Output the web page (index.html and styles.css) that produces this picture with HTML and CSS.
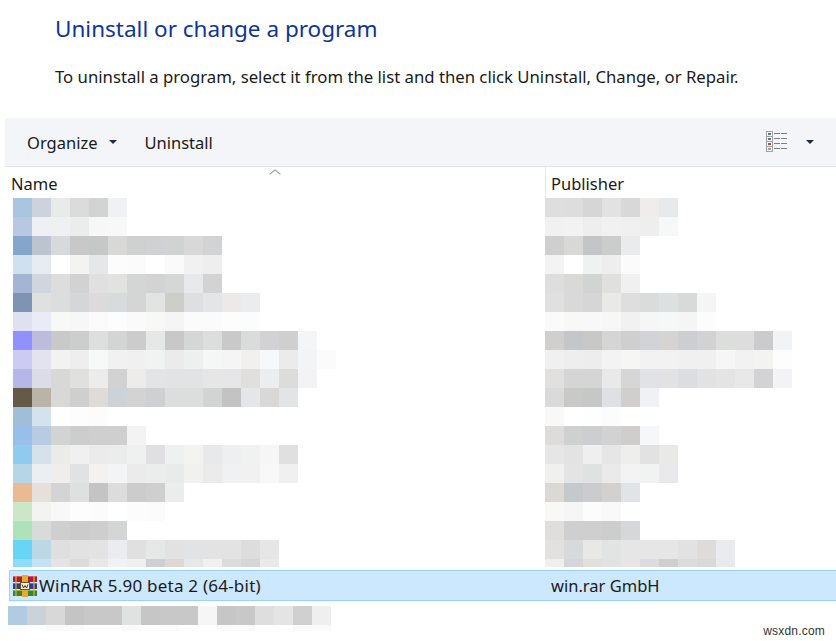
FILE: index.html
```html
<!DOCTYPE html>
<html lang="en">
<head>
    <meta charset="UTF-8">
    <title>Programs and Features</title>
    <link rel="stylesheet" href="styles.css">
</head>
<body>

<div class="page">
    <div class="intro">
        <h1>Uninstall or change a program</h1>
        <p>To uninstall a program, select it from the list and then click Uninstall, Change, or Repair.</p>
    </div>

    <div class="toolbar">
        <div class="toolbar-item organize">
            <span>Organize</span>
            <span class="caret"></span>
        </div>
        <div class="toolbar-item uninstall">Uninstall</div>
        <div class="view-menu">
            <svg class="view-icon" width="22" height="22" viewBox="0 0 22 22">
                <rect x="1.5" y="0.5" width="6" height="20" fill="#f4f5f6" stroke="#a2a2a2"/>
                <path d="M1 5.5h7M1 10.5h7M1 15.5h7" stroke="#a2a2a2"/>
                <rect x="3" y="2" width="3" height="2" fill="#5d7a80"/>
                <rect x="3" y="7" width="3" height="2" fill="#5d7a80"/>
                <rect x="3" y="12" width="3" height="2" fill="#b0502e"/>
                <rect x="3" y="17" width="3" height="2" fill="#9aa4a8"/>
                <path d="M9 2.5h6M16 2.5h6M9 7.5h6M16 7.5h6M9 12.5h6M16 12.5h6M9 17.5h6M16 17.5h6" stroke="#808080"/>
            </svg>
            <span class="caret"></span>
        </div>
    </div>

    <div class="columns">
        <div class="column-name">Name<span class="sort-arrow"></span></div>
        <div class="column-publisher">Publisher</div>
    </div>

    <div class="blur-list" id="blurList"></div>

    <div class="selected-row">
        <div class="selected-name">
            <svg class="rar-icon" width="24" height="22" viewBox="0 0 24 22">
                <rect x="0" y="1" width="24" height="6" fill="#a81f3c"/>
                <rect x="0" y="1" width="24" height="1" fill="#d8566a"/>
                <rect x="0" y="8" width="24" height="6" fill="#2e3a94"/>
                <rect x="0" y="8" width="24" height="1" fill="#6472c4"/>
                <rect x="0" y="15" width="24" height="6" fill="#3a8430"/>
                <rect x="0" y="15" width="24" height="1" fill="#80bc58"/>
                <rect x="9" y="0" width="6" height="22" fill="#eba82e"/>
                <rect x="2" y="1" width="2" height="20" fill="#eba82e" opacity="0.6"/>
                <rect x="20" y="1" width="2" height="20" fill="#eba82e" opacity="0.6"/>
                <rect x="7.5" y="7.5" width="9" height="7" fill="#f6efdc" stroke="#6e5220"/>
                <path d="M9 9.5l1.5 3.5 1.5-2.5 1.5 2.5 1.5-3.5" fill="none" stroke="#4a3410"/>
            </svg>
            <span class="selected-text">WinRAR 5.90 beta 2 (64-bit)</span>
        </div>
        <div class="selected-publisher">win.rar GmbH</div>
    </div>

    <div class="last-row" id="lastRow"></div>
    <div class="last-row-tail" id="lastTail"></div>

    <div class="watermark">wsxdn.com</div>
</div>

<script src="app.js"></script>
</body>
</html>
```

FILE: styles.css
```css
html, body {
    margin: 0;
    padding: 0;
    background-color: #ffffff;
}

body {
    font-family: "Noto Sans", Arial, sans-serif;
    color: #1a1a1a;
}

.page {
    position: relative;
    width: 836px;
    height: 641px;
    overflow: hidden;
}

.intro {
    height: 118px;
    padding-left: 55px;
    box-sizing: border-box;
}

.intro h1 {
    margin: 0;
    padding-top: 13px;
    font-size: 22.5px;
    line-height: 32px;
    font-weight: 400;
    color: #0f3694;
}

.intro p {
    margin: 0;
    padding-top: 20px;
    font-size: 16.73px;
    line-height: 24px;
}

.toolbar {
    display: flex;
    align-items: center;
    height: 49px;
    margin-left: 5px;
    box-sizing: border-box;
    background-color: #f3f5f8;
    border-bottom: 1px solid #e4e6e9;
    font-size: 16.5px;
}

.toolbar-item {
    display: flex;
    align-items: center;
}

.organize {
    margin-left: 22px;
    gap: 12px;
}

.uninstall {
    margin-left: 27px;
}

.caret {
    width: 0;
    height: 0;
    border-left: 4px solid transparent;
    border-right: 4px solid transparent;
    border-top: 4px solid #1e2d3d;
}

.view-menu {
    display: flex;
    align-items: center;
    margin-left: auto;
    margin-right: 22px;
    gap: 19px;
}

.view-icon {
    display: block;
}

.columns {
    display: flex;
    height: 31px;
    font-size: 16.5px;
}

.column-name {
    position: relative;
    width: 540px;
    padding: 5px 0 0 6px;
    box-sizing: border-box;
    margin-left: 5px;
    line-height: 24px;
}

.sort-arrow {
    position: absolute;
    left: 266px;
    top: 3px;
    width: 7px;
    height: 7px;
    border-left: 1px solid #8a8a8a;
    border-top: 1px solid #8a8a8a;
    transform: scaleY(0.8) rotate(45deg);
}

.column-publisher {
    flex: 1;
    padding: 5px 0 0 5px;
    border-left: 1px solid #e8e8e8;
    line-height: 24px;
}

.blur-list {
    height: 369px;
    overflow: hidden;
}

.blur-row {
    display: flex;
    height: 19px;
    padding-left: 13px;
}

.blur-cols {
    display: flex;
    flex-shrink: 0;
    width: 532px;
}

.cell {
    width: 19px;
    height: 19px;
    flex-shrink: 0;
}

.selected-row {
    display: flex;
    height: 31px;
    margin: 3px 0 0 9px;
    box-sizing: border-box;
    background-color: #cce8ff;
    border: 1px solid #99d1ff;
    border-right: none;
    font-size: 16.5px;
    line-height: 29px;
}

.selected-name {
    display: flex;
    align-items: center;
    width: 535px;
    padding-left: 3px;
    box-sizing: border-box;
    gap: 2px;
}

.selected-text {
    font-size: 17px;
    letter-spacing: 0.23px;
}

.rar-icon {
    display: block;
}

.selected-publisher {
    padding-left: 6px;
}

.last-row {
    display: flex;
    margin: 5px 0 0 8px;
}

.last-row-tail {
    display: flex;
    margin-left: 8px;
}

.last-row-tail .cell {
    height: 6px;
}

.watermark {
    position: absolute;
    right: 11px;
    bottom: 3px;
    font-family: "Liberation Sans", Arial, sans-serif;
    font-size: 12px;
    line-height: 14px;
    letter-spacing: 0.2px;
    color: #333333;
}
```

FILE: app.js
```js
// colours of the pixelated rows: [name column, publisher column]
const rows = [
    ['a8c6e0 ccd3dc e9eaea dbdbdb d2d4d4 f0f1f3', 'dedede dddddd d6d6d6 e2e2e2 d8d8d8 eeedeb e8e9ea'],
    ['b8c8e0 eef0f3 eff0f1 ebecec f7f7f7 f8f8f8', 'f1f1f1 f2f2f2 eeeeee f1f1f1 f0f0f0 eeeeee f6f8f7'],
    ['84a6cc bcc4d0 d8d9da c8c8c8 c6c8c8 d8d8d6 cfd1d1 d0d1d2 d1d2d2 d8d8d8 d2d3d5', 'cfcfcf d8d8d6 c4c5c6 cbcccc e9ebec'],
    ['cfe0f0 e8ecf0 ffffff f3f3f2 e6e7e8 fcfcfc fbfbfb ffffff fafafa f1f1f2 eeeeee', 'f3f3f3 ffffff f0f1f1 eeeeee fbfbfb'],
    ['a2b5d3 d0d5de dddddd d2d2d2 e0e0e0 e2e2e0 d4d5d5 d3d3d4 d5d6d6 e8e9ea d3d3d3', 'dedede d9d9d7 d2d3d3 e0e0de f0f0f0'],
    ['7f93b2 e0e0e0 dcdddd d5d6d7 dcdada d8dbdd d5d5d5 e2e3e3 cdcdca dddfe1 e4e5e7 ebeae8 ebecee', 'e0e0e0 d9d9d9 d6d6d6 e9e9e7 dedede dadbdb dde0e0 d8d9d9 f5f5f5'],
    ['dfe0f2 ebebf8 f8f8f6 f6f7f6 fbfbfb fdfdfd fafafa f8f8f7 f5f5f5 fbfbfb fbfbfb fdfdfd fbfcfc', 'fafafa f8f8f7 f8f8f8 f7f7f7 f1f1f1 f6f6f6 f6f7f7 f5f5f5 fcfcfc'],
    ['9090ff bcbcdc c9c9c9 cccdcd dedede d3d5d5 cdcccc e6e8e8 c8c8c8 d5d7d7 dcdede c9c9c9 dadcdc d2d2d4 cfcfcf f4f5f7', 'd0cfcd c5c6c9 c8c8c6 d5d5d5 cfcfcf d2d3d6 d6d4d2 cdced1 d2d2d2 dcdedc dddddd cbcbcd f2f3f5'],
    ['cbcbf4 e3e3f0 f2f2f2 eeeeee f7f8f8 f1f1f2 f0f0f0 f1f2f2 ebebec eef0f0 f5f6f6 f5f5f5 f1f0ef f7f8f9 ebebeb f3f4f5 fbfbfb', 'f0f0f0 eeeeee ededed f3f3f3 f6f6f5 f2f2f2 f2f2f2 f0f0f0 f0f0f0 f6f6f6 f2f2f2 f3f3f2 fdfdfd'],
    ['b6b6e8 dcdce8 d8d8d8 e0e0de ececec d2d2d2 eeecea e2e4e6 e2e3e4 e2e3e4 e6e6e7 e6e6e8 e0dfde ecedef dcdcda f3f3f5', 'e2e0de d5d5d5 d5d5d5 e9e9ea d6d6d6 e0e2e5 e3e2e2 dcdde0 e2e2e2 e4e4e4 e8e8e8 d3d3d6 f3f3f5'],
    ['655a45 b9b3a8 d8d8d6 cfcfd0 dfdbd8 cdd2d6 d3d3d3 cfd0d2 dcdede dcdddd d2d3d3 c3c3c3 e5e6e8 d9d8d6 e3e4e6', 'd9dad9 c9c9c8 c6c8c8 dee0e3 d0cfce f0f1f5'],
    ['a0bfd6 d3e2ed ffffff fdfdfd fcfcfc', 'f8f8f8 ffffff fefefe fcfcfc'],
    ['98bfea b8cbe2 d2d3d3 cdcdcd cfcfcf cfcfcf f3f3f3', 'dedcdb cfd0d0 cdcecf d2d2d2 cfcecc f6f7f9'],
    ['8fcbee d5e2ec ebebe9 f0f0f0 ebebec ebecec eff0f0 e0e0e2 eff0f0 f3f3f1 e8e9ea eeeff0 f0f1f1 f6f6f6 e0e0e0', 'e6e6e6 e3e3e3 efefef e6e6e6 eeeeec e2e2e2 e9e9e8'],
    ['b6d6e8 ebeff2 efeeec e0e2e4 f3f2f1 f3f4f6 ebebeb ebecec e9ebeb f1f1f0 ebebec f0f1f2 f1f1f2 f8f8f8 f0f0f0', 'f0f0ee e4e4e4 e0e1e1 eaeaea f3f3f3 f1f3f3 e9e9eb'],
    ['eabb92 e5e0da d4d4d4 dfe0e0 c4c4c4 dcdcdc cccccc cfcfcf ebeded', 'dcd8d4 c5c9cc ccccce d3d1d0 e0e4e6'],
    ['cbe6c8 f3f3f1 f8f8f8 fdfdfd fbfbfb ffffff fcfcfc fbfbfb', 'f8f8f8 f6f6f6 fcfcfc f9f9f9'],
    ['aee2b8 d8dcd8 cfcfcf cccccc cecece d4d5d5', 'dfdedd cfcfcf cfcfcf cdcdcd d6d7d9'],
    ['68d4f8 bcd8e4 dfdfdf e2e2e2 e3e3e3 ebecef e0e0e0 e6e8e8 e2e2e2 e2e3e5 e3e3e3 e3e3e3 dddddd e6e6e6', 'e2e1df d8d9db e8e8e6 e2e4e4 e6e6e6 e6e6e6 e6e6e6 e2e2e2 dedcda e9ebee'],
    ['90dcf8 c4e2f4 e4e4e4 dedcda e8e8e8 f0f1f4 efefef cfd0d5 dcd8d6 e6e7e9 f0f0f0 dcdcdc d6d6d8 eaeaea', 'efefed d6d6da e2e0de e2e2e4 e8e6e4 dcdcde cfcfcf dcdcde d9d9d9 e8eaec']
];

const lastRow = 'b0cbe2 ccd3d8 d8d8d8 c4c4c4 c8c8c8 c8c8c8 e0e2e2 c6c6c6 c8c8c8 c8c8c8 f6f6f6 c6c6c6 c8c8c8 dedede e4e4e4 d0d0d0 efefef';
const lastTail = 'ffffff ffffff fafafa fafafa ffffff ffffff fafafa ffffff fafafa ffffff ffffff fafafa fafafa ffffff ffffff fafafa fafafa';

function addCells(parent, colours) {
    colours.split(' ').forEach((c) => {
        const cell = document.createElement('div');
        cell.className = 'cell';
        cell.style.backgroundColor = '#' + c;
        parent.appendChild(cell);
    });
}

const list = document.getElementById('blurList');
rows.forEach((r) => {
    const row = document.createElement('div');
    row.className = 'blur-row';
    const nameCol = document.createElement('div');
    nameCol.className = 'blur-cols';
    addCells(nameCol, r[0]);
    const pubCol = document.createElement('div');
    pubCol.className = 'blur-cols';
    addCells(pubCol, r[1]);
    row.appendChild(nameCol);
    row.appendChild(pubCol);
    list.appendChild(row);
});

addCells(document.getElementById('lastRow'), lastRow);
addCells(document.getElementById('lastTail'), lastTail);
```
